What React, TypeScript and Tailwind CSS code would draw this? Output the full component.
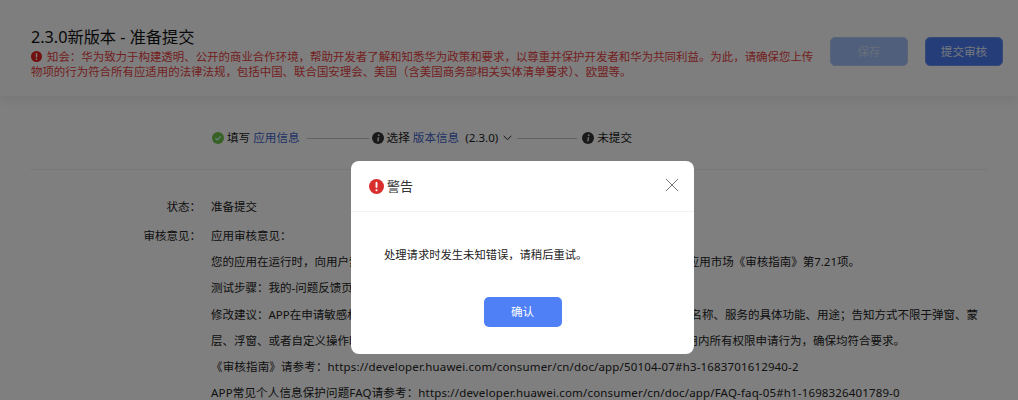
import React from "react";

const font = { fontFamily: '"Noto Sans", "Noto Sans CJK SC", sans-serif' };

function Info() {
  return (
    <svg width="12" height="12" viewBox="0 0 12 12" className="shrink-0">
      <circle cx="6" cy="6" r="6" fill="#333" />
      <rect x="5.5" y="5" width="1.5" height="4.4" fill="#ddd" transform="rotate(8 6 7)" />
      <circle cx="6.7" cy="3.2" r="0.9" fill="#ddd" />
    </svg>
  );
}

function Alert({ size, color, className }: { size: number; color: string; className?: string }) {
  return (
    <svg width={size} height={size} viewBox="0 0 16 16" className={className}>
      <circle cx="8" cy="8" r="8" fill={color} />
      <rect x="7" y="3" width="2" height="6.6" rx="1" fill="#fff" />
      <circle cx="8" cy="12" r="1.15" fill="#fff" />
    </svg>
  );
}

function Line({ left, right, className }: { left: string; right?: string; className: string }) {
  return (
    <div className={"flex justify-between h-[26.2px] leading-[26.2px] whitespace-nowrap " + className}>
      <span>{left}</span>
      {right ? <span>{right}</span> : null}
    </div>
  );
}

export default function App() {
  return (
    <div className="relative w-[1018px] h-[400px] overflow-hidden bg-white text-[11.5px] text-[#222]" style={font}>
      <header className="h-[96px] flex items-start justify-between bg-[#fcfcfc] pl-[31px] pr-[15px] pt-[26px] shadow-[0_6px_8px_rgba(0,0,0,0.06)]">
        <div className="w-[786px]">
          <h1 className="text-[16.2px] leading-[22px] text-[#111] font-normal">2.3.0新版本 - 准备提交</h1>
          <p className="mt-[1px] text-[11.45px] leading-[15px] text-[#e84040] w-[786px]">
            <Alert size={11} color="#e02020" className="inline align-[-0.5px]" />
            <span className="ml-[5px]">知会：华为致力于构建透明、公开的商业合作环境，帮助开发者了解和知悉华为政策和要求，以尊重并保护开发者和华为共同利益。为此，请确保您上传物项的行为符合所有应适用的法律法规，包括中国、联合国安理会、美国（含美国商务部相关实体清单要求）、欧盟等。</span>
          </p>
        </div>
        <div className="flex gap-[17px] mt-[11px]">
          <button className="w-[78px] h-[29px] rounded-[5px] bg-[#a0c0f8] text-[#d0dcf4] text-[11.6px] border border-[#b4c8ee]">保存</button>
          <button className="w-[78px] h-[29px] rounded-[5px] bg-[#4a7cf4] text-[#e8eefa] text-[11.6px] border border-[#6f94ee]">提交审核</button>
        </div>
      </header>

      <div className="ml-[212px] mt-[35px] flex items-center h-[14px] text-[#1a1a1a] text-[11.6px]">
        <svg width="12" height="12" viewBox="0 0 12 12" className="shrink-0">
          <circle cx="6" cy="6" r="6" fill="#6fc44a" />
          <path d="M3.4 6.2 5.3 8 8.7 4.4" stroke="#dff" strokeWidth="1.2" fill="none" />
        </svg>
        <span className="ml-[3px]">填写</span>
        <span className="ml-[3px] text-[#3f63c8]">应用信息</span>
        <span className="ml-[7px] w-[62px] h-px bg-[#c4c4c4]" />
        <span className="ml-[3px]"><Info /></span>
        <span className="ml-[3px]">选择</span>
        <span className="ml-[3px] text-[#3f63c8]">版本信息</span>
        <span className="ml-[6px]">(2.3.0)</span>
        <svg width="9" height="6" viewBox="0 0 9 6" className="ml-[5px]"><path d="M.7.9 4.5 4.6 8.3.9" stroke="#222" fill="none" /></svg>
        <span className="ml-[5px] w-[60px] h-px bg-[#c4c4c4]" />
        <span className="ml-[5px]"><Info /></span>
        <span className="ml-[3px]">未提交</span>
      </div>

      <div className="mx-[30px] mt-[24px] h-px bg-[#f0f0f0]" />

      <div className="mt-[24px] grid grid-cols-[211px_1fr] text-[#222]">
        <div className="h-[26px] leading-[26px] text-right pr-[10px]">状态：</div>
        <div className="h-[26px] leading-[26px]">准备提交</div>
        <div className="h-[26px] leading-[26px] text-right pr-[10px] mt-[3px]">审核意见：</div>
        <div className="mt-[3px]">
          <Line className="w-[767px]" left="应用审核意见：" />
          <Line className="w-[649px]" left="您的应用在运行时，向用户索" right="应用市场《审核指南》第7.21项。" />
          <Line className="w-[767px]" left="测试步骤：我的-问题反馈页面" />
          <Line className="w-[767px]" left="修改建议：APP在申请敏感权限" right="名称、服务的具体功能、用途；告知方式不限于弹窗、蒙" />
          <Line className="w-[694px]" left="层、浮窗、或者自定义操作时" right="用内所有权限申请行为，确保均符合要求。" />
          <Line className="w-[767px] tracking-[0.16px]" left="《审核指南》请参考：https://developer.huawei.com/consumer/cn/doc/app/50104-07#h3-1683701612940-2" />
          <Line className="w-[767px] tracking-[0.16px]" left="APP常见个人信息保护问题FAQ请参考：https://developer.huawei.com/consumer/cn/doc/app/FAQ-faq-05#h1-1698326401789-0" />
        </div>
      </div>

      <div className="absolute inset-0 bg-black/50 flex items-start justify-center">
        <div className="ml-[27px] mt-[161px] w-[343px] h-[193px] rounded-[8px] bg-white flex flex-col">
          <div className="h-[51px] border-b border-[#f2f2f2] flex items-center justify-between pl-[18px] pr-[15px] shrink-0">
            <div className="flex items-center gap-[3px] mt-[1px]">
              <Alert size={15} color="#d92e2e" className="shrink-0" />
              <span className="text-[13px] text-[#333]">警告</span>
            </div>
            <svg width="14" height="14" viewBox="0 0 14 14" className="mb-[3px]">
              <path d="M1 1 13 13M13 1 1 13" stroke="#777" strokeWidth="1" fill="none" />
            </svg>
          </div>
          <p className="ml-[33px] mt-[33px] leading-[20px] text-[11.3px] text-[#222]">处理请求时发生未知错误，请稍后重试。</p>
          <button className="self-center mt-[32px] w-[78px] h-[30px] rounded-[5px] bg-[#4f80f6] text-white text-[11.6px]">确认</button>
        </div>
      </div>
    </div>
  );
}
